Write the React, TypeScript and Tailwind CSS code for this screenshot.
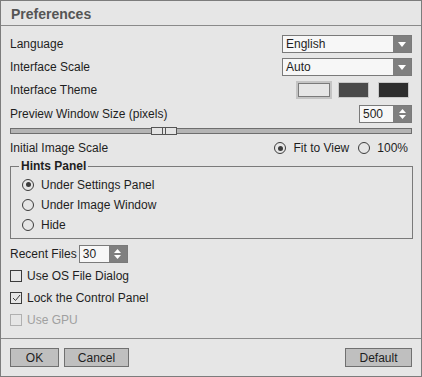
import React from 'react';

const font = { fontFamily: '"Liberation Sans", Arial, sans-serif' };

const Arrow: React.FC = () => (
  <svg width="8" height="5" viewBox="0 0 8 5">
    <path d="M0 0 H8 L4 5 Z" fill="#ffffff" />
  </svg>
);

const UpDown: React.FC = () => (
  <svg width="7" height="10" viewBox="0 0 7 10">
    <path d="M0 4 L3.5 0 L7 4 Z" fill="#ffffff" />
    <path d="M0 6 L3.5 10 L7 6 Z" fill="#ffffff" />
  </svg>
);

const Select: React.FC<{ value: string }> = ({ value }) => (
  <div className="w-[130px] h-[18px] flex border border-[#7a7a7a] bg-[#f7f7f7]">
    <div className="flex-1 flex items-center pl-[3px] text-[12px] text-[#1e1e1e]">{value}</div>
    <div className="w-[18px] bg-[#7f7f7f] flex items-center justify-center">
      <Arrow />
    </div>
  </div>
);

const Spinner: React.FC<{ value: string; w: string }> = ({ value, w }) => (
  <div className={`${w} h-[18px] flex border border-[#7a7a7a] bg-[#f7f7f7]`}>
    <div className="flex-1 flex items-center pl-[3px] text-[12px] text-[#1e1e1e]">{value}</div>
    <div className="w-[18px] bg-[#7f7f7f] flex items-center justify-center">
      <UpDown />
    </div>
  </div>
);

const Radio: React.FC<{ checked?: boolean; label: string }> = ({ checked, label }) => (
  <div className="flex items-center gap-[7px]">
    <div className="w-[12px] h-[12px] rounded-full border border-[#3c3c3c] flex items-center justify-center">
      {checked && <div className="w-[5px] h-[5px] rounded-full bg-[#3c3c3c]" />}
    </div>
    <span className="text-[12px] text-[#1e1e1e]">{label}</span>
  </div>
);

const Check: React.FC<{ checked?: boolean; disabled?: boolean; label: string }> = ({ checked, disabled, label }) => (
  <div className="flex items-center gap-[5px] h-[16px]">
    <div
      className={`w-[12px] h-[12px] flex items-center justify-center border ${
        disabled ? 'border-[#b0b0b0]' : 'border-[#3c3c3c]'
      }`}
    >
      {checked && (
        <svg width="9" height="8" viewBox="0 0 9 8">
          <path d="M1 4 L3.5 6.5 L8 1" stroke="#3c3c3c" strokeWidth="1" fill="none" />
        </svg>
      )}
    </div>
    <span className={`text-[12px] ${disabled ? 'text-[#a0a0a0]' : 'text-[#1e1e1e]'}`}>{label}</span>
  </div>
);

const Button: React.FC<{ label: string; w: string }> = ({ label, w }) => (
  <div
    className={`${w} h-[19px] flex items-center justify-center bg-[#bfbfbf] border border-[#707070] text-[12px] text-[#1e1e1e]`}
  >
    {label}
  </div>
);

export default function App() {
  return (
    <div
      style={font}
      className="w-[422px] h-[377px] flex flex-col bg-[#e6e6e6] border border-[#7c7c7c] select-none"
    >
      {/* Title */}
      <div className="h-[25px] shrink-0 border-b border-[#8a8a8a] flex items-center pl-[10px] pt-[2px]">
        <span className="text-[14px] font-bold text-[#555555]">Preferences</span>
      </div>

      {/* Body */}
      <div className="flex-1 flex flex-col px-[9px] pt-[9px]">
        <div className="h-[18px] flex items-center justify-between">
          <span className="text-[12px] text-[#1e1e1e]">Language</span>
          <Select value="English" />
        </div>
        <div className="h-[18px] mt-[5px] flex items-center justify-between">
          <span className="text-[12px] text-[#1e1e1e]">Interface Scale</span>
          <Select value="Auto" />
        </div>
        <div className="h-[18px] mt-[5px] flex items-center justify-between">
          <span className="text-[12px] text-[#1e1e1e]">Interface Theme</span>
          <div className="flex items-center mr-[3px]">
            <div className="w-[36px] h-[18px] bg-[#c4c4c4] p-[2px]">
              <div className="w-full h-full bg-[#e6e6e6] border border-[#7a7a7a]" />
            </div>
            <div className="w-[31px] h-[16px] ml-[6px] bg-[#4a4a4a] border border-[#c8c8c8]" />
            <div className="w-[31px] h-[16px] ml-[9px] bg-[#2e2e2e] border border-[#c8c8c8]" />
          </div>
        </div>
        <div className="h-[18px] mt-[6px] flex items-center justify-between">
          <span className="text-[12px] text-[#1e1e1e]">Preview Window Size (pixels)</span>
          <Spinner value="500" w="w-[53px]" />
        </div>

        {/* Slider */}
        <div className="relative h-[6px] mt-[5px] bg-[#b4b4b4] border border-[#6e6e6e]">
          <div className="absolute left-[140px] top-[-2px] w-[26px] h-[8px] bg-[#e4e4e4] border border-[#555555] flex items-center justify-center gap-[2px]">
            <div className="w-px h-full bg-[#555555]" />
            <div className="w-px h-full bg-[#555555]" />
          </div>
        </div>

        <div className="h-[16px] mt-[6px] flex items-center justify-between">
          <span className="text-[12px] text-[#1e1e1e]">Initial Image Scale</span>
          <div className="flex items-center gap-[9px] mr-[4px]">
            <Radio checked label="Fit to View" />
            <Radio label="100%" />
          </div>
        </div>

        {/* Hints Panel group */}
        <div className="relative mt-[10px] h-[73px] border border-[#7a7a7a] flex flex-col pl-[11px] pt-[9px] gap-[3px] mr-[-1px]">
          <span className="absolute left-[8px] top-[-8px] px-[2px] bg-[#e6e6e6] text-[12px] font-bold text-[#1e1e1e] leading-[14px]">
            Hints Panel
          </span>
          <div className="h-[17px] flex items-center">
            <Radio checked label="Under Settings Panel" />
          </div>
          <div className="h-[17px] flex items-center">
            <Radio label="Under Image Window" />
          </div>
          <div className="h-[17px] flex items-center">
            <Radio label="Hide" />
          </div>
        </div>

        <div className="h-[18px] mt-[6px] flex items-center gap-[2px]">
          <span className="text-[12px] text-[#1e1e1e]">Recent Files</span>
          <Spinner value="30" w="w-[49px]" />
        </div>

        <div className="mt-[5px]">
          <Check label="Use OS File Dialog" />
        </div>
        <div className="mt-[6px]">
          <Check checked label="Lock the Control Panel" />
        </div>
        <div className="mt-[6px]">
          <Check disabled label="Use GPU" />
        </div>
      </div>

      {/* Footer */}
      <div className="h-[38px] shrink-0 border-t border-[#8a8a8a] flex items-start justify-between px-[9px] pt-[9px]">
        <div className="flex gap-[5px]">
          <Button label="OK" w="w-[49px]" />
          <Button label="Cancel" w="w-[65px]" />
        </div>
        <Button label="Default" w="w-[67px]" />
      </div>
    </div>
  );
}
